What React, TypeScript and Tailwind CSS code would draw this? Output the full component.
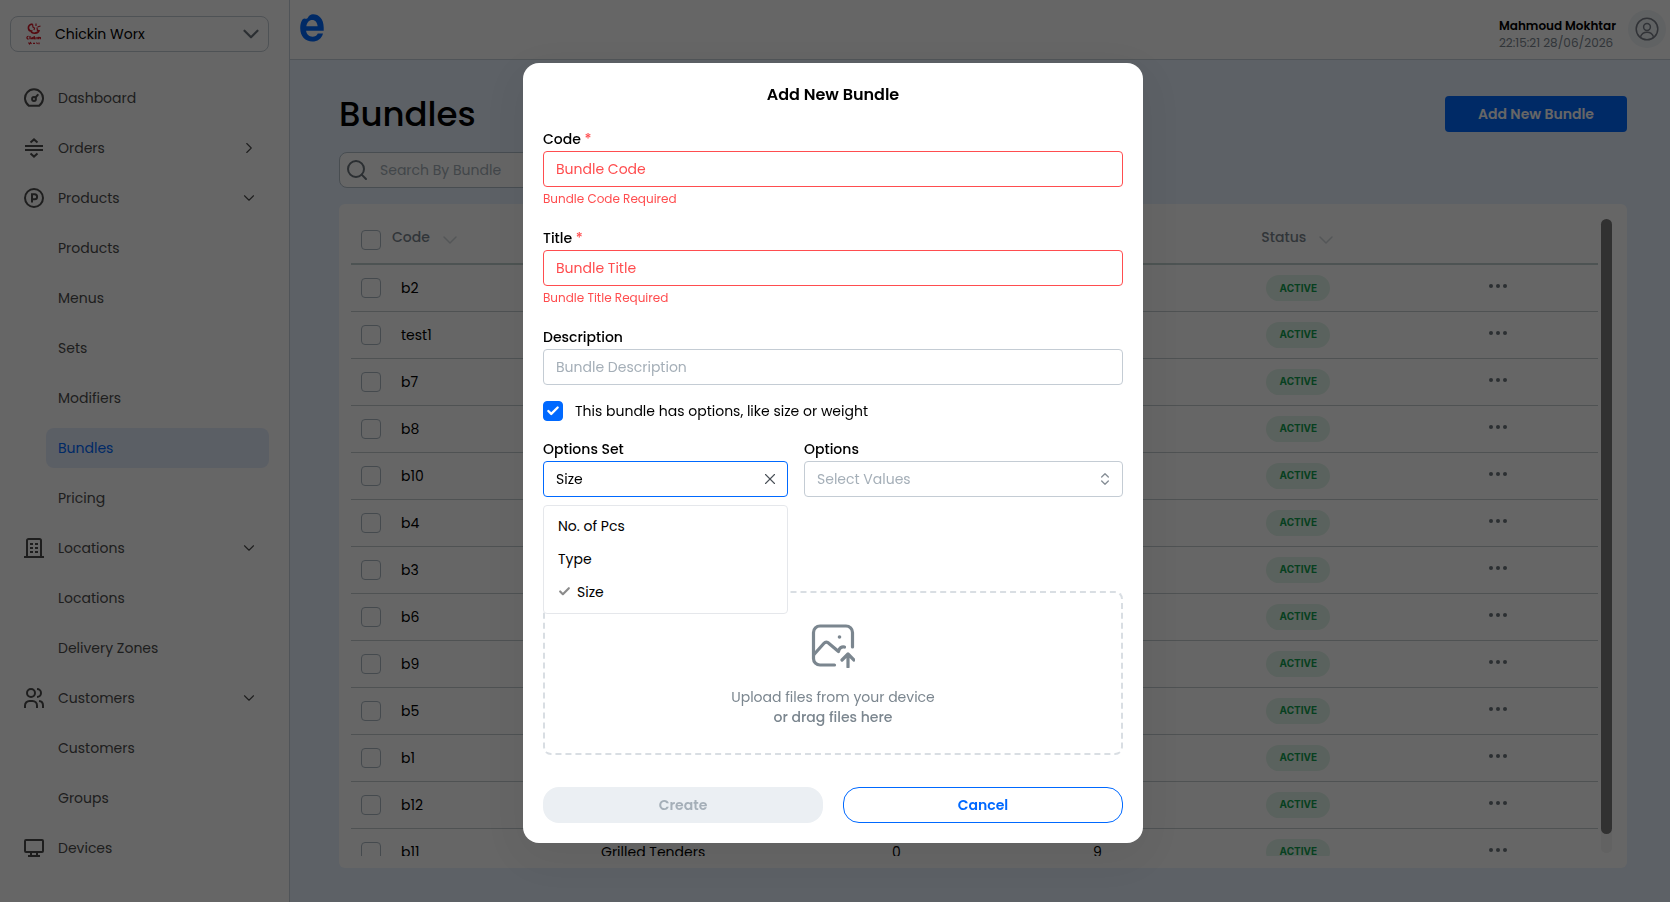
import React, { useState } from 'react';
import { Check, ChevronDown, ChevronRight, ChevronsUpDown, Search, X } from 'lucide-react';

interface NavChild {
  label: string;
  active?: boolean;
}

interface NavGroup {
  label: string;
  icon: React.ReactNode;
  expandable?: boolean;
  children?: NavChild[];
}

interface Bundle {
  code: string;
  title?: string;
  options?: number;
  products?: number;
}

const DashboardIcon = () => (
  <svg className="h-5 w-5" viewBox="0 0 20 20" fill="none" stroke="currentColor" strokeWidth="2">
    <path d="M5 17.800a9 9 0 1 1 10 0z" strokeLinejoin="round" />
    <circle cx="10" cy="11" r="1.900" />
    <path d="M11.500 9.500l2.300-2.600" strokeLinecap="round" />
  </svg>
);

const OrdersIcon = () => (
  <svg className="h-5 w-5" viewBox="0 0 20 20" fill="none" stroke="currentColor" strokeWidth="2">
    <path d="M1 8h18M1 12h18" />
    <path d="M6.500 4.400L10 1.400l3.500 3M6.500 15.600l3.500 3 3.500-3" />
  </svg>
);

const ProductsIcon = () => (
  <svg className="h-5 w-5" viewBox="0 0 20 20" fill="none" stroke="currentColor" strokeWidth="2">
    <circle cx="10" cy="10" r="9" />
    <path d="M8 14.600V6.300h2.600a2.500 2.500 0 0 1 0 5H8" />
  </svg>
);

const LocationsIcon = () => (
  <svg className="h-5 w-5" viewBox="0 0 20 20" fill="none" stroke="currentColor" strokeWidth="2">
    <path d="M0 19h20M3 19V2.500a1.500 1.500 0 0 1 1.500-1.500h11A1.500 1.500 0 0 1 17 2.500V19" />
    <path d="M6 6h3M11 6h3M6 10h3M11 10h3M6 14h3M11 14h3" />
  </svg>
);

const CustomersIcon = () => (
  <svg className="h-5 w-5" viewBox="0 0 20 20" fill="none" stroke="currentColor" strokeWidth="2">
    <circle cx="7" cy="5" r="4" />
    <path d="M1 20v-2.500a4.500 4.500 0 0 1 4.500-4.500h3a4.500 4.500 0 0 1 4.500 4.500V20" />
    <path d="M13 1a4 4 0 0 1 0 8M15 13a4.500 4.500 0 0 1 4 4.500V20" />
  </svg>
);

const DevicesIcon = () => (
  <svg className="h-5 w-5" viewBox="0 0 20 20" fill="none" stroke="currentColor" strokeWidth="2">
    <rect x="1" y="2" width="18" height="12" rx="1" />
    <path d="M7 14v4M13 14v4M4 18h12" />
  </svg>
);

const UserIcon = () => (
  <svg className="h-6 w-6 text-[#7b808a]" viewBox="0 0 24 24" fill="none" stroke="currentColor" strokeWidth="1.500">
    <circle cx="12" cy="12" r="10.800" />
    <circle cx="12" cy="10" r="3.400" />
    <path d="M5.500 19.800c1-3 3.500-4.600 6.500-4.600s5.500 1.600 6.500 4.600" />
  </svg>
);

const BrandLogo = () => (
  <svg className="h-6 w-5" viewBox="0 0 20 24" fill="none" stroke="#d4192a" aria-hidden="true">
    <path d="M8.500 2.200c-3 0-4.500 2-4 4.500.4 2 2 2.500 3 2.500-.5 1.500 1.500 2.200 3.500 2 2.300-.2 3.800-1.500 4.200-3.200" strokeWidth="1.700" />
    <path d="M8.500 2.200l.5 3 1.500.8-.5 2M12 1.500v2.500M13 5.500l.5 3.500M13.500 5l3-1" strokeWidth="1.200" />
    <path
      d="M4.500 14.300c-1.800-.3-2.300 2.900 0 2.700M6 14v3.200M7.500 15.500v1.700M8.800 15v2.200M10.200 14v3.200M11.500 15.500l-1 .8 1 .9M13 15v2.200M14.500 17.200v-1.700l1.800.2v1.500"
      strokeWidth="1.300"
    />
    <path d="M4.500 20.500l1 1.500 1-1.500 1 1.500M9 21.300h2M12.500 20.500l1 1.500M15 20.500v1.700" strokeWidth="1.200" />
  </svg>
);

const AppLogo = () => (
  <svg className="h-7 w-6" viewBox="0 0 24 28" role="img" aria-label="Home">
    <path
      d="M23.700 16.800v-3.300C23.700 5 19 .3 13 .3c-2.500 0-4.200 1.300-5 3.200-.5 1.300-2 1.500-3.500 1.100-1 .2-2 .9-2.300 1.400C.8 8.300.2 11 .2 14c0 8.500 5.300 13.500 12.100 13.500 5.200 0 9.200-2.500 10.700-8h-5.200c-1 2.100-2.800 3.200-5.300 3.200-3.500 0-5.900-2.200-6.400-5.900z"
      fill="#0069ff"
    />
    <path d="M6.300 12.300C6.900 8.500 9 6 12.200 6s5.100 2.500 5.400 6.300z" fill="#fff" />
  </svg>
);

const UploadIcon = () => (
  <svg
    className="h-11 w-11"
    viewBox="0 0 44 44"
    fill="none"
    stroke="#7b868f"
    strokeWidth="3.200"
    strokeLinecap="round"
    strokeLinejoin="round"
  >
    <path d="M23.500 41H9a6.500 6.500 0 0 1-6.500-6.500v-26A6.500 6.500 0 0 1 9 2h26A6.500 6.500 0 0 1 41.500 8.500V23" />
    <path d="M3 30.500L13 19.200a3.200 3.200 0 0 1 4.700 0L27.500 27.500c.5-3.500 3.300-5.300 6-4.500" />
    <path d="M37 43V30M31 36l6-6 6 6" />
    <circle cx="28.500" cy="13" r="1.800" fill="#7b868f" stroke="none" />
  </svg>
);

const navGroups: NavGroup[] = [
  { label: 'Dashboard', icon: <DashboardIcon /> },
  { label: 'Orders', icon: <OrdersIcon />, expandable: true },
  {
    label: 'Products',
    icon: <ProductsIcon />,
    expandable: true,
    children: [
      { label: 'Products' },
      { label: 'Menus' },
      { label: 'Sets' },
      { label: 'Modifiers' },
      { label: 'Bundles', active: true },
      { label: 'Pricing' },
    ],
  },
  {
    label: 'Locations',
    icon: <LocationsIcon />,
    expandable: true,
    children: [{ label: 'Locations' }, { label: 'Delivery Zones' }],
  },
  {
    label: 'Customers',
    icon: <CustomersIcon />,
    expandable: true,
    children: [{ label: 'Customers' }, { label: 'Groups' }],
  },
  { label: 'Devices', icon: <DevicesIcon /> },
];

const bundles: Bundle[] = [
  { code: 'b2' },
  { code: 'test1' },
  { code: 'b7' },
  { code: 'b8' },
  { code: 'b10' },
  { code: 'b4' },
  { code: 'b3' },
  { code: 'b6' },
  { code: 'b9' },
  { code: 'b5' },
  { code: 'b1' },
  { code: 'b12' },
  { code: 'b11', title: 'Grilled Tenders', options: 0, products: 9 },
];

const optionSets = ['No. of Pcs', 'Type', 'Size'];

function Sidebar() {
  return (
    <aside className="flex w-[290px] shrink-0 flex-col overflow-hidden border-r border-[#c9d3dc] bg-white">
      <div className="pl-[10px] pr-5 pt-4">
        <label className="flex h-9 items-center rounded-lg border border-[#c4ccd4] pl-[13px] pr-1">
          <BrandLogo />
          <select
            aria-label="Brand"
            className="ml-[11px] min-w-0 flex-1 appearance-none bg-transparent text-sm text-black outline-none"
          >
            <option>Chickin Worx</option>
          </select>
          <ChevronDown className="h-[26px] w-[26px] text-[#6c757d]" strokeWidth={2} />
        </label>
      </div>

      <nav className="mt-[21px] text-sm text-[#4d4d4d]">
        {navGroups.map((group) => (
          <div key={group.label}>
            <a href="#" className="flex h-[50px] items-center pl-6 pr-[31px]">
              {group.icon}
              <span className="ml-[14px] flex-1">{group.label}</span>
              {group.expandable &&
                (group.children ? (
                  <ChevronDown className="h-[18px] w-[18px]" strokeWidth={1.5} />
                ) : (
                  <ChevronRight className="h-[18px] w-[18px]" strokeWidth={1.5} />
                ))}
            </a>
            {group.children?.map((child) => (
              <div key={child.label} className="py-[5px] pl-[46px] pr-5">
                <a
                  href="#"
                  className={`flex h-10 items-center rounded-lg pl-3 ${
                    child.active ? 'bg-[#e4edfd] text-[#0069ff]' : ''
                  }`}
                >
                  {child.label}
                </a>
              </div>
            ))}
          </div>
        ))}
      </nav>
    </aside>
  );
}

function Header() {
  return (
    <header className="flex h-[60px] shrink-0 items-start justify-between border-b border-[#c9d3dc] bg-white pl-[10px] pr-1">
      <div className="pt-[14px]">
        <AppLogo />
      </div>
      <div className="flex items-start">
        <div className="pt-[17px] text-xs leading-[17px]">
          <p className="font-semibold text-black">Mahmoud Mokhtar</p>
          <p className="text-[#7b868f]">22:15:21 28/06/2026</p>
        </div>
        <div className="ml-3 mt-[10px] flex h-[38px] w-[38px] items-center justify-center rounded-full bg-[#f1f4f7]">
          <UserIcon />
        </div>
      </div>
    </header>
  );
}

function RowCheckbox({ label }: { label: string }) {
  return (
    <input
      type="checkbox"
      aria-label={label}
      className="block h-5 w-5 appearance-none rounded border border-[#adb8c2] bg-white"
    />
  );
}

function SortableHeading({ children }: { children: React.ReactNode }) {
  return (
    <span className="flex items-center pb-1.5">
      {children}
      <ChevronDown className="ml-2 mt-1.5 h-6 w-6 text-[#d3d8dc]" strokeWidth={1.5} />
    </span>
  );
}

function BundlesTable() {
  return (
    <div className="flex min-h-0 flex-1 rounded-md bg-white p-3">
      <div className="min-w-0 flex-1 overflow-hidden">
        <table className="w-full table-fixed border-collapse text-sm">
          <colgroup>
            <col className="w-[41px]" />
            <col className="w-[209px]" />
            <col className="w-[291px]" />
            <col className="w-[201px]" />
            <col />
            <col className="w-[11%]" />
            <col className="w-[16%]" />
          </colgroup>
          <thead>
            <tr className="h-12 border-b-2 border-[#c0d0cf] text-left text-[#7b868f]">
              <th className="pl-[10px]">
                <RowCheckbox label="Select all" />
              </th>
              <th className="font-medium">
                <SortableHeading>Code</SortableHeading>
              </th>
              <th />
              <th />
              <th />
              <th className="font-medium">
                <SortableHeading>Status</SortableHeading>
              </th>
              <th />
            </tr>
          </thead>
          <tbody>
            {bundles.map((bundle) => (
              <tr key={bundle.code} className="h-[47px] border-b border-[#c5cdd0] text-black">
                <td className="pl-[10px]">
                  <RowCheckbox label={`Select ${bundle.code}`} />
                </td>
                <td className="pl-[9px]">{bundle.code}</td>
                <td>{bundle.title}</td>
                <td>{bundle.options}</td>
                <td>{bundle.products}</td>
                <td className="pl-[5px]">
                  <span className="flex h-[26px] w-16 items-center justify-center rounded-full bg-[#e2f5ea] font-[Inter,sans-serif] text-[10px] font-bold text-[#12a150]">
                    ACTIVE
                  </span>
                </td>
                <td>
                  <button
                    type="button"
                    aria-label="Row actions"
                    className="mx-auto flex items-center gap-[3px] pb-1"
                  >
                    <span className="h-1 w-1 rounded-full bg-[#6c757d]" />
                    <span className="h-1 w-1 rounded-full bg-[#6c757d]" />
                    <span className="h-1 w-1 rounded-full bg-[#6c757d]" />
                  </button>
                </td>
              </tr>
            ))}
          </tbody>
        </table>
      </div>
      {/* Scrollbar */}
      <div className="mx-[3px] my-[3px] w-[11px] rounded-full bg-[#f4f4f4]">
        <div className="h-[97%] rounded-full bg-[#7a7a7a]" />
      </div>
    </div>
  );
}

interface FieldProps {
  id: string;
  label: string;
  placeholder: string;
  error?: string;
}

function Field({ id, label, placeholder, error }: FieldProps) {
  return (
    <div>
      <label htmlFor={id} className="block text-sm font-medium leading-6 text-black">
        {label} {error && <span className="text-[#ff4d4f]">*</span>}
      </label>
      <input
        id={id}
        type="text"
        placeholder={placeholder}
        className={`block h-9 w-full rounded border bg-white px-3 text-sm outline-none ${
          error ? 'border-[#ff4d4f] placeholder:text-[#ff4d4f]' : 'border-[#c4ccd4] placeholder:text-[#a5afb8]'
        }`}
      />
      {error && <p className="mt-1 text-xs leading-4 text-[#ff4d4f]">{error}</p>}
    </div>
  );
}

function AddBundleModal() {
  const [optionSet, setOptionSet] = useState('Size');

  return (
    <div className="fixed inset-0 flex items-start justify-center overflow-hidden bg-black/60 pr-1 pt-[63px]">
      <form
        role="dialog"
        aria-labelledby="modal-title"
        className="w-[620px] rounded-2xl bg-white p-5 shadow-[0_12px_48px_16px_rgba(0,0,0,0.05)]"
      >
        <h2 id="modal-title" className="text-center text-base font-semibold leading-6 text-black">
          Add New Bundle
        </h2>

        <div className="mt-5 space-y-[19px]">
          <Field id="code" label="Code" placeholder="Bundle Code" error="Bundle Code Required" />
          <Field id="title" label="Title" placeholder="Bundle Title" error="Bundle Title Required" />
          <Field id="description" label="Description" placeholder="Bundle Description" />
        </div>

        <label className="mt-4 flex items-center gap-3 text-sm text-black">
          <span className="relative h-5 w-5">
            <input
              type="checkbox"
              defaultChecked
              className="peer block h-5 w-5 appearance-none rounded border border-[#c4ccd4] checked:border-[#0069ff] checked:bg-[#0069ff]"
            />
            <Check
              className="pointer-events-none absolute inset-0 m-auto hidden h-[14px] w-[14px] text-white peer-checked:block"
              strokeWidth={4}
            />
          </span>
          This bundle has options, like size or weight
        </label>

        {/* Options */}
        <div className="mt-4 flex gap-4">
          <div className="relative w-[245px]">
            <label htmlFor="option-set" className="block text-sm font-medium leading-6 text-black">
              Options Set
            </label>
            <div className="flex h-9 items-center rounded border border-[#0069ff] pl-3 pr-2">
              <input
                id="option-set"
                type="text"
                role="combobox"
                aria-expanded="true"
                aria-controls="option-set-list"
                value={optionSet}
                onChange={(e) => setOptionSet(e.target.value)}
                className="min-w-0 flex-1 text-sm text-black outline-none"
              />
              <button type="button" aria-label="Clear" onClick={() => setOptionSet('')}>
                <X className="h-[18px] w-[18px] text-[#495057]" strokeWidth={1.5} />
              </button>
            </div>
            <ul
              id="option-set-list"
              role="listbox"
              className="absolute left-0 right-0 top-[68px] z-10 rounded border border-[#e5e7eb] bg-white pb-[5px] pt-[3px] text-sm text-black"
            >
              {optionSets.map((option) => (
                <li
                  key={option}
                  role="option"
                  aria-selected={option === optionSet}
                  onClick={() => setOptionSet(option)}
                  className="flex h-[33px] items-center gap-1.5 px-[14px]"
                >
                  {option === optionSet && <Check className="h-[13px] w-[13px] text-[#8b8b8b]" strokeWidth={4} />}
                  {option}
                </li>
              ))}
            </ul>
          </div>
          <div className="flex-1">
            <label htmlFor="options" className="block text-sm font-medium leading-6 text-black">
              Options
            </label>
            <div className="relative">
              <select
                id="options"
                className="block h-9 w-full appearance-none rounded border border-[#c4ccd4] bg-white px-3 text-sm text-[#a5afb8] outline-none"
              >
                <option>Select Values</option>
              </select>
              <ChevronsUpDown
                className="pointer-events-none absolute inset-y-0 right-[10px] my-auto h-4 w-4 text-[#868e96]"
                strokeWidth={2}
              />
            </div>
          </div>
        </div>

        <label
          htmlFor="files"
          className="mt-[94px] flex h-[164px] flex-col items-center rounded-lg border-2 border-dashed border-[#d9dee3] pt-[31px] text-sm text-[#7b868f]"
        >
          <UploadIcon />
          <span className="mt-[19px]">Upload files from your device</span>
          <span className="font-medium">or drag files here</span>
          <input id="files" type="file" className="sr-only" />
        </label>

        <div className="mt-8 grid grid-cols-2 gap-5 text-sm font-semibold">
          <button type="button" disabled className="h-9 rounded-2xl bg-[#ebeff3] text-[#a5afb8]">
            Create
          </button>
          <button type="button" className="h-9 rounded-2xl border border-[#0069ff] bg-white text-[#0069ff]">
            Cancel
          </button>
        </div>
      </form>
    </div>
  );
}

export default function App() {
  return (
    <div className="flex h-screen overflow-hidden bg-[#e8f2fe] font-[Poppins,Inter,sans-serif]">
      <Sidebar />
      <div className="flex min-w-0 flex-1 flex-col">
        <Header />
        <main className="flex min-h-0 flex-1 flex-col pb-[34px] pl-[49px] pr-[43px] pt-9">
          <div className="flex items-center justify-between">
            <h1 className="text-[34px] font-medium leading-9 text-black">Bundles</h1>
            <button
              type="button"
              className="h-9 w-[182px] rounded bg-[#0069ff] text-sm font-semibold text-white"
            >
              Add New Bundle
            </button>
          </div>
          <div className="mb-4 mt-5 flex h-9 w-[400px] shrink-0 items-center rounded-lg border border-[#b3c0cb] bg-white px-[5px]">
            <Search className="h-6 w-6 text-[#6c757d]" strokeWidth={2} />
            <input
              type="search"
              aria-label="Search bundles"
              placeholder="Search By Bundle"
              className="ml-[11px] flex-1 text-sm outline-none placeholder:text-[#a5afb8]"
            />
          </div>
          <BundlesTable />
        </main>
      </div>
      <AddBundleModal />
    </div>
  );
}
